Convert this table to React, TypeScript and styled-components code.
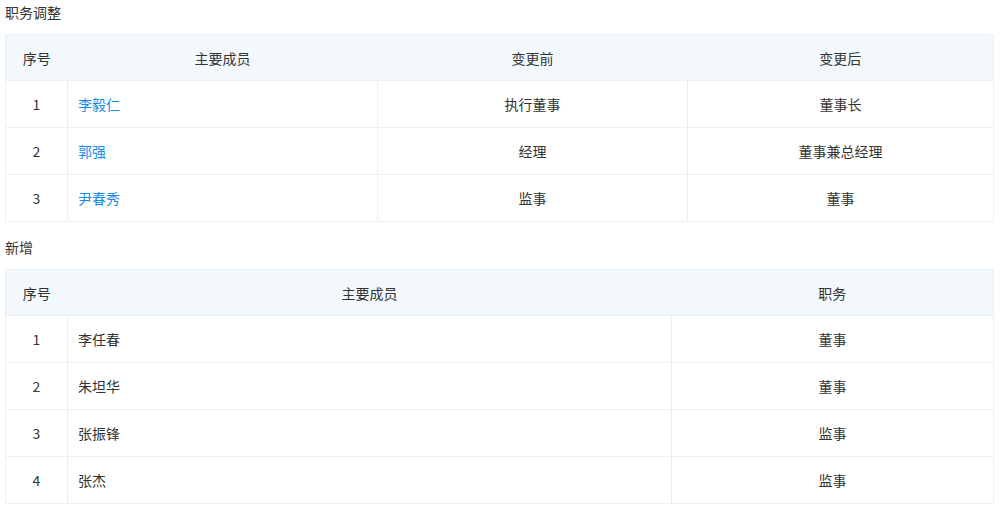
import React from "react";
import styled, { createGlobalStyle } from "styled-components";

const GlobalStyle = createGlobalStyle`
  html, body {
    margin: 0;
    padding: 0;
    background: #fff;
  }
  body {
    font-family: "Noto Sans CJK SC", "Noto Sans", sans-serif;
    font-size: 14px;
    color: #333;
  }
`;

type Change = { name: string; before: string; after: string };
type Added = { name: string; duty: string };

const changes: Change[] = [
  { name: "李毅仁", before: "执行董事", after: "董事长" },
  { name: "郭强", before: "经理", after: "董事兼总经理" },
  { name: "尹春秀", before: "监事", after: "董事" },
];

const added: Added[] = [
  { name: "李任春", duty: "董事" },
  { name: "朱坦华", duty: "董事" },
  { name: "张振锋", duty: "监事" },
  { name: "张杰", duty: "监事" },
];

const App = () => (
  <Page>
    <GlobalStyle />
    <Title>职务调整</Title>
    <Table>
      <colgroup>
        <col style={{ width: 62 }} />
        <col style={{ width: 310 }} />
        <col style={{ width: 310 }} />
        <col />
      </colgroup>
      <thead>
        <tr>
          <Th>序号</Th>
          <Th>主要成员</Th>
          <Th>变更前</Th>
          <Th>变更后</Th>
        </tr>
      </thead>
      <tbody>
        {changes.map((row, i) => (
          <tr key={row.name}>
            <Td $align="center">{i + 1}</Td>
            <Td $align="left">
              <Link>{row.name}</Link>
            </Td>
            <Td $align="center">{row.before}</Td>
            <Td $align="center">{row.after}</Td>
          </tr>
        ))}
      </tbody>
    </Table>

    <Title $gap={13}>新增</Title>
    <Table>
      <colgroup>
        <col style={{ width: 62 }} />
        <col style={{ width: 604 }} />
        <col />
      </colgroup>
      <thead>
        <tr>
          <Th>序号</Th>
          <Th>主要成员</Th>
          <Th>职务</Th>
        </tr>
      </thead>
      <tbody>
        {added.map((row, i) => (
          <tr key={row.name}>
            <Td $align="center">{i + 1}</Td>
            <Td $align="left">{row.name}</Td>
            <Td $align="center">{row.duty}</Td>
          </tr>
        ))}
      </tbody>
    </Table>
  </Page>
);

// Styles

const Page = styled.div`
  padding: 0 6px 0 5px;
`;

const Title = styled.div<{ $gap?: number }>`
  height: 24px;
  line-height: 24px;
  margin-top: ${p => p.$gap ?? 0}px;
  margin-bottom: 10px;
  color: #333;
  font-size: 14px;
`;

const Table = styled.table`
  width: 100%;
  border-collapse: collapse;
  table-layout: fixed;
  border: 1px solid #e9f0f7;
`;

const Th = styled.th`
  height: 45px;
  padding: 0 10px;
  background: #f2f8fc;
  border-bottom: 1px solid #e9f0f7;
  font-weight: normal;
  text-align: center;
  color: #333;
`;

const Td = styled.td<{ $align: "left" | "center" }>`
  height: 46px;
  padding: 0 10px;
  border: 1px solid #e9f0f7;
  text-align: ${p => p.$align};
  color: #333;
`;

const Link = styled.a`
  color: #128bed;
  cursor: pointer;
`;

// Export

export default App;
